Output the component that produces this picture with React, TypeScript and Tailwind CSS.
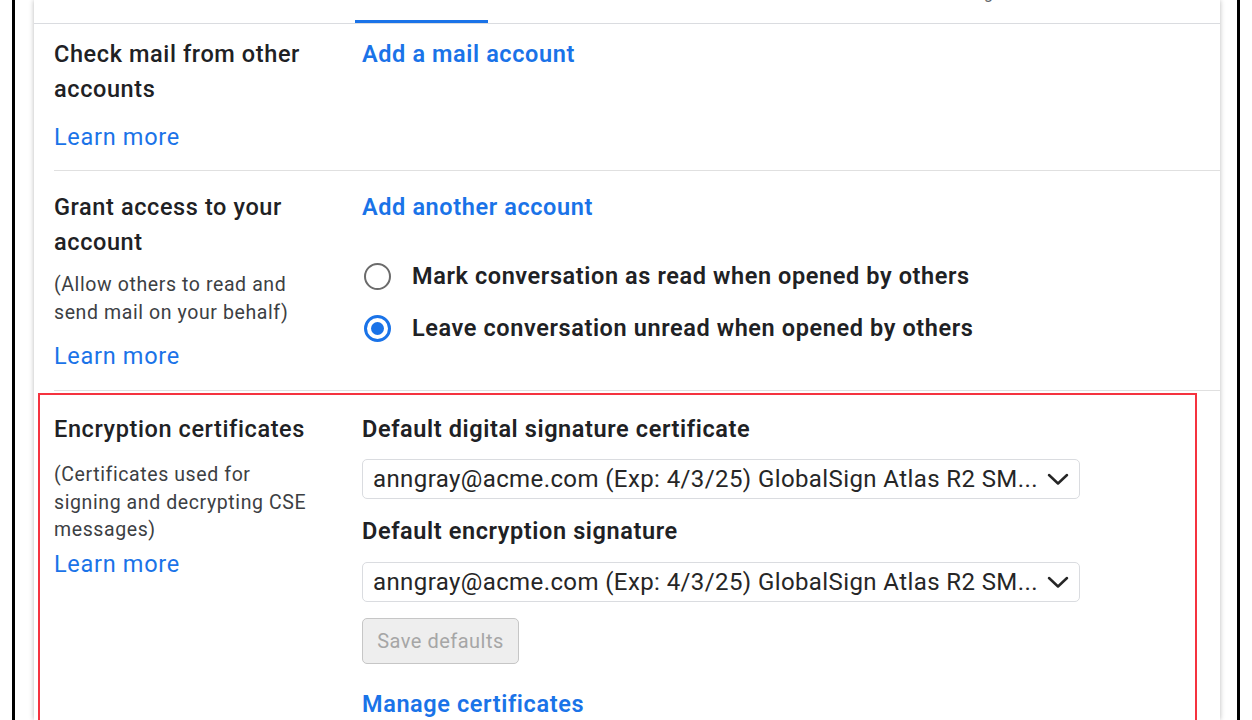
import React from 'react';

const TITLE = 'text-[23.5px] font-medium leading-[35px] tracking-[0.6px] text-[#202124]';
const LINK = 'text-[23.5px] leading-[35px] tracking-[0.7px] text-[#1a73e8]';
const ACTION = 'text-[23.5px] font-semibold leading-[35px] tracking-[0.6px] text-[#1a73e8]';
const DESC = 'text-[19.5px] leading-[27.5px] tracking-[0.6px] text-[#3c4043]';

function Radio({ checked }: { checked?: boolean }) {
  return checked ? (
    <span className="flex h-[27px] w-[27px] shrink-0 items-center justify-center rounded-full border-[3px] border-[#1a73e8]">
      <span className="block h-[13px] w-[13px] rounded-full bg-[#1a73e8]" />
    </span>
  ) : (
    <span className="block h-[27px] w-[27px] shrink-0 rounded-full border-[2.5px] border-[#6b6b6b]" />
  );
}

function CertSelect({ value }: { value: string }) {
  return (
    <div className="flex h-[40px] w-[718px] items-center justify-between rounded-[5px] border border-[#dadce0] bg-white pl-[10px] pr-[10px]">
      <span className="whitespace-nowrap text-[24px] tracking-[0.4px] text-[#262626]">{value}</span>
      <svg width="22" height="14" viewBox="0 0 22 14" className="shrink-0">
        <polyline points="2,3 11,11.5 20,3" fill="none" stroke="#262626" strokeWidth="2.5" strokeLinecap="round" strokeLinejoin="round" />
      </svg>
    </div>
  );
}

export default function App() {
  const cert = 'anngray@acme.com (Exp: 4/3/25) GlobalSign Atlas R2 SM...';

  return (
    <div
      className="h-[720px] w-[1252px] overflow-hidden bg-white"
      style={{ fontFamily: 'Roboto, "Liberation Sans", sans-serif' }}
    >
      <div className="ml-[12px] flex h-full w-[1228px] border-x-[3px] border-black">
        <div className="ml-[19px] h-full w-[1186px] bg-white shadow-[0_0_5px_rgba(0,0,0,0.28)]">
          {/* tab strip, labels scrolled out of view above */}
          <div className="flex h-[24px] items-end overflow-hidden border-b border-[#dadce0]">
            <div className="w-[321px]" />
            <div className="h-[3px] w-[133px] bg-[#1a73e8]" />
            <div className="ml-[425px] -mt-[16px] self-start text-[16px] leading-[20px] text-[#5f6368]">
              Forwarding
            </div>
          </div>

          {/* Check mail from other accounts */}
          <div className="ml-[20px] flex border-b border-[#e0e0e0] pb-[15px] pt-[13px]">
            <div className="w-[308px] shrink-0">
              <div className={`w-[290px] ${TITLE}`}>Check mail from other accounts</div>
              <div className={`mt-[13px] ${LINK}`}>Learn more</div>
            </div>
            <div className={ACTION}>Add a mail account</div>
          </div>

          {/* Grant access */}
          <div className="ml-[20px] flex border-b border-[#e0e0e0] pb-[16px] pt-[19px]">
            <div className="w-[308px] shrink-0">
              <div className={`w-[290px] ${TITLE}`}>Grant access to your account</div>
              <div className={`mt-[11px] w-[272px] ${DESC}`}>
                (Allow others to read and send mail on your behalf)
              </div>
              <div className={`mt-[13px] ${LINK}`}>Learn more</div>
            </div>
            <div>
              <div className={ACTION}>Add another account</div>
              <div className="mt-[34px] flex flex-col gap-[17px]">
                <label className="flex items-center gap-[21px]">
                  <span className="ml-[2px]"><Radio /></span>
                  <span className="text-[23.5px] font-semibold tracking-[0.6px] text-[#202124]">
                    Mark conversation as read when opened by others
                  </span>
                </label>
                <label className="flex items-center gap-[21px]">
                  <span className="ml-[2px]"><Radio checked /></span>
                  <span className="text-[23.5px] font-semibold tracking-[0.6px] text-[#202124]">
                    Leave conversation unread when opened by others
                  </span>
                </label>
              </div>
            </div>
          </div>

          {/* Encryption certificates, highlighted */}
          <div className="ml-[4px] mr-[23px] mt-[2px] flex border-2 border-[#f5333f] pb-[40px] pl-[14px] pt-[17px]">
            <div className="w-[308px] shrink-0">
              <div className={TITLE}>Encryption certificates</div>
              <div className={`mt-[14px] ${DESC}`}>
                (Certificates used for
                <br />
                signing and decrypting CSE
                <br />
                messages)
              </div>
              <div className={`mt-[3px] ${LINK}`}>Learn more</div>
            </div>
            <div>
              <div className="text-[23.5px] font-semibold leading-[35px] tracking-[0.6px] text-[#202124]">
                Default digital signature certificate
              </div>
              <div className="mt-[12px]">
                <CertSelect value={cert} />
              </div>
              <div className="mt-[15px] text-[23.5px] font-semibold leading-[35px] tracking-[0.6px] text-[#202124]">
                Default encryption signature
              </div>
              <div className="mt-[13px]">
                <CertSelect value={cert} />
              </div>
              <button
                disabled
                className="mt-[16px] h-[46px] w-[157px] rounded-[5px] border border-[#c6c6c6] bg-[#eeeeee] text-[20px] tracking-[0.5px] text-[#a6a6a6]"
              >
                Save defaults
              </button>
              <div className={`mt-[23px] ${ACTION}`}>Manage certificates</div>
            </div>
          </div>
        </div>
      </div>
    </div>
  );
}
